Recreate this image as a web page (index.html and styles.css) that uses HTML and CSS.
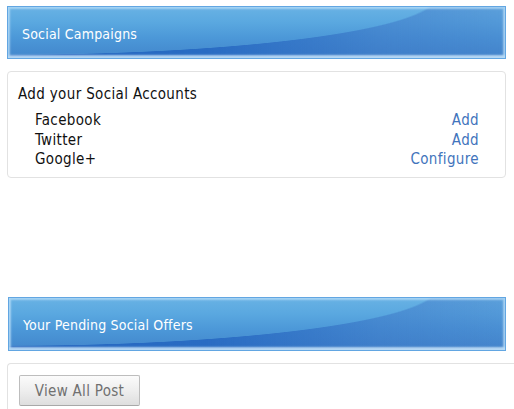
FILE: index.html
```html
<!DOCTYPE html>
<html>
<head>
<meta charset="utf-8">
<link rel="stylesheet" href="styles.css">
</head>
<body>
<div class="page">
  <div class="panel-head"><span class="head-title">Social Campaigns</span></div>
  <div class="card card-accounts">
    <div class="card-title">Add your Social Accounts</div>
    <ul class="acct-list">
      <li class="acct-row"><span>Facebook</span><a class="acct-link" href="#">Add</a></li>
      <li class="acct-row"><span>Twitter</span><a class="acct-link" href="#">Add</a></li>
      <li class="acct-row"><span>Google+</span><a class="acct-link" href="#">Configure</a></li>
    </ul>
  </div>
  <div class="spacer"></div>
  <div class="panel-head panel-head-2"><span class="head-title">Your Pending Social Offers</span></div>
  <div class="card card-offers">
    <button class="btn" type="button">View All Post</button>
  </div>
</div>
</body>
</html>
```
FILE: styles.css
```css
html, body {
  margin: 0;
  padding: 0;
  background: #ffffff;
  overflow: hidden;
}
.page {
  padding: 6px 0 0 7px;
  width: 499px;
  font-family: "DejaVu Sans Condensed", "DejaVu Sans", sans-serif;
  font-stretch: semi-condensed;
}
.panel-head {
  position: relative;
  height: 53px;
  box-sizing: border-box;
  border: 1px solid #62a6e2;
  background: linear-gradient(to bottom, #68b2e4 0%, #5aa8e0 30%, #4c98d8 60%, #4286cc 100%);
  display: flex;
  align-items: center;
  padding-left: 14px;
  overflow: hidden;
}
.panel-head::before {
  content: "";
  position: absolute;
  inset: 0;
  background: linear-gradient(to right, rgba(36, 102, 192, 1) 0%, rgba(40, 106, 194, 0.95) 40%, rgba(60, 118, 198, 0.55) 75%, rgba(70, 126, 202, 0.35) 100%);
  -webkit-mask-image: radial-gradient(ellipse 430px 58px at 0 -10px, transparent 99%, #000 100%);
  mask-image: radial-gradient(ellipse 430px 58px at 0 -10px, transparent 99%, #000 100%);
}
.panel-head::after {
  content: "";
  position: absolute;
  inset: 0;
  box-shadow: inset 0 0 2px 2px rgba(190, 225, 250, 0.7), inset 0 -3px 2px 0 rgba(230, 245, 255, 0.6);
}
.head-title {
  position: relative;
  z-index: 1;
  color: #ffffff;
  font-size: 14px;
  letter-spacing: 0.2px;
  padding-top: 2px;
}
.card {
  margin-top: 12px;
  border: 1px solid #e2e2e2;
  border-radius: 4px;
  background: #ffffff;
  box-sizing: border-box;
}
.card-accounts {
  height: 107px;
  padding: 13px 26px 0 10px;
}
.card-title {
  font-size: 15px;
  letter-spacing: 0.35px;
  color: #111111;
  line-height: 18px;
}
.acct-list {
  list-style: none;
  margin: 8px 0 0 0;
  padding: 0 0 0 17px;
}
.acct-row {
  display: flex;
  justify-content: space-between;
  font-size: 15px;
  letter-spacing: 0.35px;
  line-height: 19.5px;
  color: #111111;
}
.acct-link {
  color: #4274bc;
  text-decoration: none;
}
.spacer {
  height: 119px;
}
.panel-head-2 {
  margin-left: 1px;
  height: 54px;
}
.card-offers {
  width: 530px;
  height: 60px;
  border-right: none;
  padding: 11px 0 0 11px;
}
.btn {
  width: 121px;
  height: 31px;
  font-family: inherit;
  font-stretch: semi-condensed;
  font-size: 15px;
  letter-spacing: 0.3px;
  color: #707070;
  background: linear-gradient(to bottom, #fbfbfb 0%, #eeeeee 50%, #dedede 100%);
  border: 1px solid #bdbdbd;
  border-bottom-color: #a8a8a8;
  border-radius: 2px;
  padding: 0;
}
```
